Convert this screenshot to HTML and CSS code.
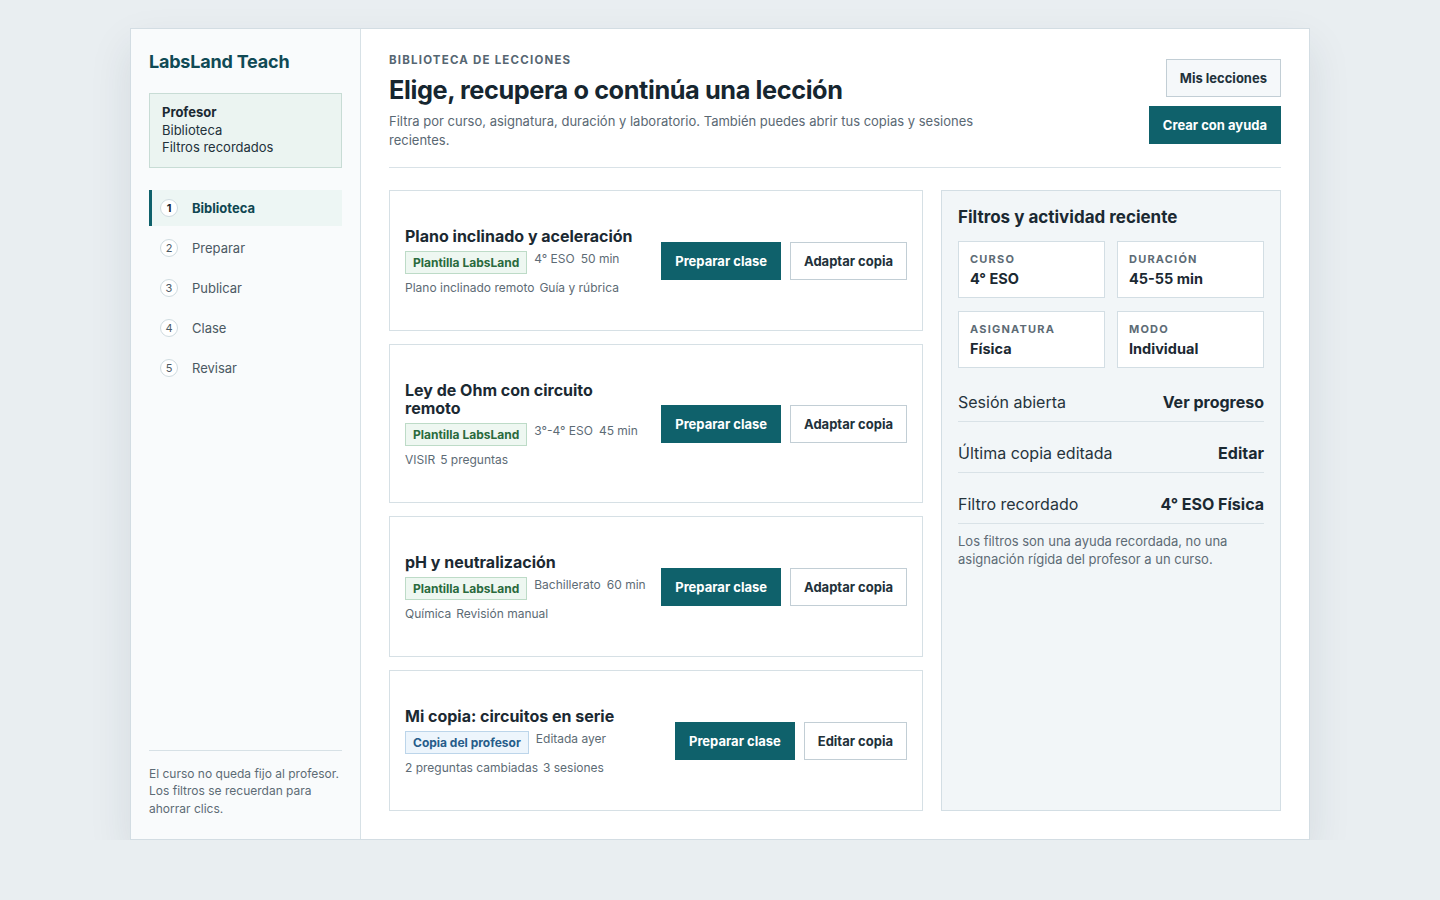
FILE: index.html
```html
<!DOCTYPE html>
<html lang="es">
<head>
<meta charset="utf-8">
<title>LabsLand Teach</title>
<link rel="stylesheet" href="styles.css">
</head>
<body>
<div class="window">
  <aside class="sidebar">
    <div class="brand">LabsLand Teach</div>
    <div class="profile">
      <strong>Profesor</strong>
      <span>Biblioteca</span>
      <span>Filtros recordados</span>
    </div>
    <nav class="steps">
      <a class="step active"><span class="num">1</span><span>Biblioteca</span></a>
      <a class="step"><span class="num">2</span><span>Preparar</span></a>
      <a class="step"><span class="num">3</span><span>Publicar</span></a>
      <a class="step"><span class="num">4</span><span>Clase</span></a>
      <a class="step"><span class="num">5</span><span>Revisar</span></a>
    </nav>
    <p class="side-note">El curso no queda fijo al profesor. Los filtros se recuerdan para ahorrar clics.</p>
  </aside>

  <main class="main">
    <header class="header">
      <div class="header-text">
        <div class="eyebrow">BIBLIOTECA DE LECCIONES</div>
        <h1>Elige, recupera o continúa una lección</h1>
        <p class="lead">Filtra por curso, asignatura, duración y laboratorio. También puedes abrir tus copias y sesiones recientes.</p>
      </div>
      <div class="header-actions">
        <button class="btn btn-light">Mis lecciones</button>
        <button class="btn btn-primary">Crear con ayuda</button>
      </div>
    </header>

    <div class="content">
      <section class="lessons">
        <article class="card">
          <div class="card-info">
            <h2>Plano inclinado y aceleración</h2>
            <div class="meta">
              <span class="badge badge-green">Plantilla LabsLand</span>
              <span>4° ESO</span><span>50 min</span>
            </div>
            <div class="desc"><span>Plano inclinado remoto</span><span>Guía y rúbrica</span></div>
          </div>
          <div class="card-actions">
            <button class="btn btn-primary">Preparar clase</button>
            <button class="btn btn-outline">Adaptar copia</button>
          </div>
        </article>

        <article class="card">
          <div class="card-info">
            <h2>Ley de Ohm con circuito remoto</h2>
            <div class="meta">
              <span class="badge badge-green">Plantilla LabsLand</span>
              <span>3°-4° ESO</span><span>45 min</span>
            </div>
            <div class="desc"><span>VISIR</span><span>5 preguntas</span></div>
          </div>
          <div class="card-actions">
            <button class="btn btn-primary">Preparar clase</button>
            <button class="btn btn-outline">Adaptar copia</button>
          </div>
        </article>

        <article class="card">
          <div class="card-info">
            <h2>pH y neutralización</h2>
            <div class="meta">
              <span class="badge badge-green">Plantilla LabsLand</span>
              <span>Bachillerato</span><span>60 min</span>
            </div>
            <div class="desc"><span>Química</span><span>Revisión manual</span></div>
          </div>
          <div class="card-actions">
            <button class="btn btn-primary">Preparar clase</button>
            <button class="btn btn-outline">Adaptar copia</button>
          </div>
        </article>

        <article class="card">
          <div class="card-info">
            <h2>Mi copia: circuitos en serie</h2>
            <div class="meta">
              <span class="badge badge-blue">Copia del profesor</span>
              <span>Editada ayer</span>
            </div>
            <div class="desc"><span>2 preguntas cambiadas</span><span>3 sesiones</span></div>
          </div>
          <div class="card-actions">
            <button class="btn btn-primary">Preparar clase</button>
            <button class="btn btn-outline">Editar copia</button>
          </div>
        </article>
      </section>

      <aside class="panel">
        <h3>Filtros y actividad reciente</h3>
        <div class="filters">
          <div class="filter"><div class="f-label">CURSO</div><div class="f-value">4° ESO</div></div>
          <div class="filter"><div class="f-label">DURACIÓN</div><div class="f-value">45-55 min</div></div>
          <div class="filter"><div class="f-label">ASIGNATURA</div><div class="f-value">Física</div></div>
          <div class="filter"><div class="f-label">MODO</div><div class="f-value">Individual</div></div>
        </div>
        <div class="activity">
          <div class="row"><span>Sesión abierta</span><strong>Ver progreso</strong></div>
          <div class="row"><span>Última copia editada</span><strong>Editar</strong></div>
          <div class="row"><span>Filtro recordado</span><strong>4° ESO Física</strong></div>
        </div>
        <p class="panel-note">Los filtros son una ayuda recordada, no una asignación rígida del profesor a un curso.</p>
      </aside>
    </div>
  </main>
</div>
</body>
</html>
```

FILE: styles.css
```css
* { box-sizing: border-box; }

html, body {
  margin: 0;
  padding: 0;
}

body {
  background: #e9eef1;
  font-family: Inter, "Noto Sans", "Liberation Sans", sans-serif;
  color: #1b2932;
  padding-top: 28px;
}

.window {
  width: 1180px;
  height: 812px;
  margin: 0 auto;
  background: #ffffff;
  border: 1px solid #d3dde3;
  box-shadow: 0 18px 40px rgba(30, 50, 70, 0.10);
  display: grid;
  grid-template-columns: 230px 1fr;
}

/* Sidebar */
.sidebar {
  background: #f9fbfc;
  border-right: 1px solid #d7e1e6;
  padding: 22px 18px 22px 18px;
  display: flex;
  flex-direction: column;
}

.brand {
  font-size: 18px;
  font-weight: 700;
  line-height: 22px;
  color: #104a55;
  letter-spacing: -0.2px;
}

.profile {
  margin-top: 20px;
  background: #ebf4f1;
  border: 1px solid #c8dcd5;
  padding: 10px 12px 10px;
  display: flex;
  flex-direction: column;
  font-size: 13px;
  line-height: 17.5px;
  color: #22313a;
}

.profile strong { font-weight: 700; color: #1b2932; }

.steps {
  margin-top: 22px;
  display: flex;
  flex-direction: column;
  gap: 4px;
}

.step {
  height: 36px;
  display: flex;
  align-items: center;
  gap: 14px;
  padding-left: 11px;
  border-left: 3px solid transparent;
  font-size: 13px;
  color: #4b5963;
}

.step .num {
  width: 18px;
  height: 18px;
  border-radius: 50%;
  border: 1px solid #cfdbe0;
  background: #ffffff;
  display: flex;
  align-items: center;
  justify-content: center;
  font-size: 11px;
  color: #4b5963;
  margin-left: -3px;
}

.step.active {
  background: #edf6f4;
  border-left-color: #0f616b;
  font-weight: 700;
  color: #0f4651;
}

.step.active .num {
  color: #1b2932;
  font-weight: 700;
}

.side-note {
  margin: auto 0 0 0;
  border-top: 1px solid #d7e1e6;
  padding-top: 14px;
  font-size: 12px;
  line-height: 17.5px;
  color: #5d6b75;
}

/* Main */
.main {
  padding: 24px 28px 28px 28px;
  display: flex;
  flex-direction: column;
  min-height: 0;
}

.header {
  display: flex;
  align-items: center;
  justify-content: space-between;
  padding-bottom: 17px;
  border-bottom: 1px solid #d9e2e7;
}

.eyebrow {
  font-size: 11.5px;
  line-height: 15px;
  font-weight: 700;
  letter-spacing: 1.2px;
  color: #566672;
}

h1 {
  margin: 6px 0 0 0;
  font-size: 25.3px;
  line-height: 32px;
  font-weight: 700;
  letter-spacing: -0.4px;
  color: #162630;
}

.lead {
  margin: 6px 0 0 0;
  max-width: 600px;
  font-size: 13px;
  line-height: 19px;
  color: #5a6873;
}

.header-actions {
  display: flex;
  flex-direction: column;
  align-items: flex-end;
  gap: 9px;
}

.btn {
  font-family: inherit;
  height: 38px;
  padding: 0 13px;
  font-size: 13px;
  font-weight: 700;
  border-radius: 0;
  display: inline-flex;
  align-items: center;
  justify-content: center;
  white-space: nowrap;
  cursor: pointer;
}

.btn-primary {
  background: #0f616b;
  border: 1px solid #0f616b;
  color: #ffffff;
}

.btn-light {
  background: #f5f8fa;
  border: 1px solid #c2ced5;
  color: #22313a;
}

.btn-outline {
  background: #ffffff;
  border: 1px solid #c2ced5;
  color: #22313a;
}

.content {
  flex: 1;
  min-height: 0;
  margin-top: 22px;
  display: grid;
  grid-template-columns: 534px 340px;
  justify-content: space-between;
}

.lessons {
  display: flex;
  flex-direction: column;
  gap: 13px;
}

.card {
  flex: 1 1 auto;
  border: 1px solid #d6e0e5;
  background: #ffffff;
  padding: 16px 15px 16px 15px;
  display: grid;
  grid-template-columns: 1fr auto;
  column-gap: 14px;
  align-items: center;
}

.card h2 {
  margin: 0;
  font-size: 16px;
  line-height: 18px;
  font-weight: 700;
  color: #1b2932;
}

.meta {
  margin-top: 6px;
  display: flex;
  flex-wrap: wrap;
  align-items: flex-start;
  gap: 6px;
  font-size: 12px;
  line-height: 15px;
  color: #5d6b75;
}

.badge {
  padding: 3px 7px;
  font-weight: 700;
  font-size: 12px;
  line-height: 15px;
  border: 1px solid;
  margin-right: 1px;
}

.badge-green {
  background: #eef7f1;
  border-color: #bddbc7;
  color: #2a6a3d;
}

.badge-blue {
  background: #edf5fc;
  border-color: #bcd5ea;
  color: #275d8a;
}

.desc {
  margin-top: 6px;
  display: flex;
  flex-wrap: wrap;
  gap: 5px;
  font-size: 12px;
  line-height: 15px;
  color: #5d6b75;
}

.card-actions {
  display: flex;
  gap: 9px;
}

/* Panel */
.panel {
  background: #f2f6f8;
  border: 1px solid #d3dee4;
  padding: 16px 16px 16px 16px;
}

.panel h3 {
  margin: 0;
  font-size: 17px;
  line-height: 20px;
  font-weight: 700;
  color: #1b2932;
}

.filters {
  margin-top: 14px;
  display: grid;
  grid-template-columns: 1fr 1fr;
  gap: 13px 12px;
}

.filter {
  background: #ffffff;
  border: 1px solid #d3dee4;
  padding: 10px 11px 9px;
}

.f-label {
  font-size: 11px;
  line-height: 14px;
  font-weight: 700;
  letter-spacing: 1.2px;
  color: #5d6b75;
}

.f-value {
  margin-top: 4px;
  font-size: 14.5px;
  line-height: 18px;
  font-weight: 700;
  color: #1b2932;
}

.activity {
  margin-top: 13px;
  display: flex;
  flex-direction: column;
  gap: 10px;
}

.row {
  display: flex;
  justify-content: space-between;
  align-items: center;
  padding: 11px 0 9px;
  border-bottom: 1px solid #d9e2e7;
  font-size: 16px;
  line-height: 20px;
  color: #26343d;
}

.row strong {
  font-weight: 700;
  color: #1b2932;
}

.panel-note {
  margin: 8px 0 0 0;
  font-size: 13px;
  line-height: 18px;
  color: #5d6b75;
}
```
